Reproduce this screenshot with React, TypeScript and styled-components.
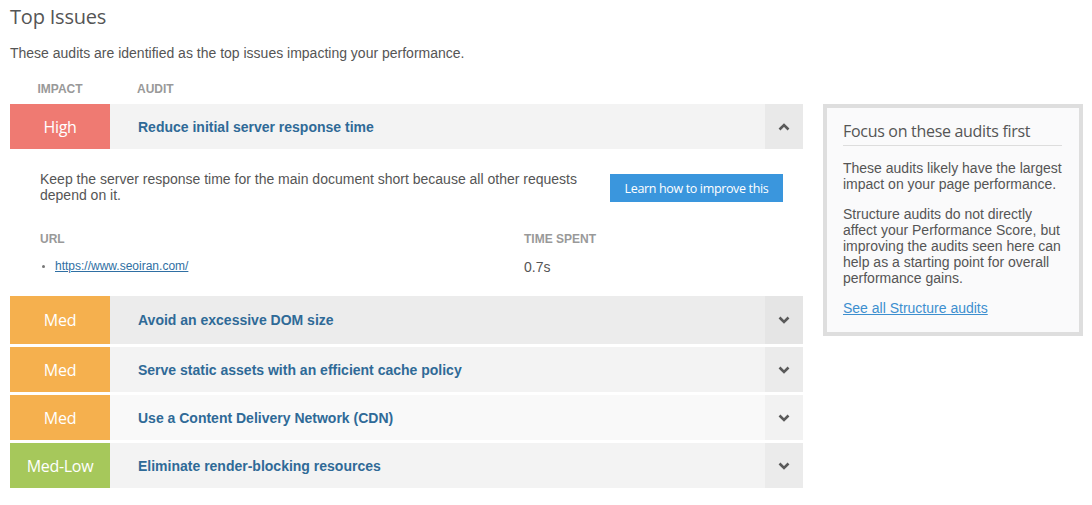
import React from "react";
import styled, { createGlobalStyle } from "styled-components";

const Global = createGlobalStyle`
  html, body { margin: 0; padding: 0; background: #fff; }
  body { font-family: "Liberation Sans", Arial, sans-serif; color: #555; }
`;

const Page = styled.div`
  display: flex;
  align-items: flex-start;
  gap: 20px;
  padding: 0 9px 0 10px;
  width: 1092px;
  box-sizing: border-box;
`;

const Main = styled.div`
  width: 793px;
  flex: none;
`;

const Title = styled.h2`
  margin: 0;
  padding-top: 4px;
  font-family: "Open Sans", sans-serif;
  font-weight: 400;
  font-size: 20px;
  line-height: 26px;
  color: #555;
  letter-spacing: -0.2px;
`;

const Intro = styled.p`
  margin: 15px 0 0;
  font-size: 14px;
  line-height: 16px;
  color: #555;
`;

const HeadRow = styled.div`
  display: flex;
  margin-top: 21px;
  height: 22px;
  align-items: flex-start;
`;

const HeadCell = styled.div<{ $w?: number; $center?: boolean; $pl?: number }>`
  width: ${(p) => (p.$w ? `${p.$w}px` : "auto")};
  text-align: ${(p) => (p.$center ? "center" : "left")};
  padding-left: ${(p) => p.$pl || 0}px;
  font-size: 12px;
  font-weight: 700;
  color: #999;
  text-transform: uppercase;
  line-height: 14px;
`;

const List = styled.div`
  display: flex;
  flex-direction: column;
  gap: 3px;
`;

const Item = styled.div``;

const Row = styled.div<{ $bg: string; $h?: number }>`
  display: flex;
  height: ${(p) => p.$h || 45}px;
  background: ${(p) => p.$bg};
  align-items: stretch;
`;

const Badge = styled.div<{ $color: string }>`
  width: 100px;
  flex: none;
  background: ${(p) => p.$color};
  color: #fff;
  display: flex;
  align-items: center;
  justify-content: center;
  font-family: "Open Sans", sans-serif;
  font-size: 16px;
  letter-spacing: -0.3px;
`;

const AuditTitle = styled.div`
  flex: 1;
  display: flex;
  align-items: center;
  padding-left: 28px;
  font-size: 14px;
  font-weight: 700;
  color: #2f6a97;
`;

const Toggle = styled.div<{ $bg: string }>`
  width: 38px;
  flex: none;
  background: ${(p) => p.$bg};
  display: flex;
  align-items: center;
  justify-content: center;
`;

const Details = styled.div`
  padding: 22px 20px 17px 30px;
`;

const DescRow = styled.div`
  display: flex;
  justify-content: space-between;
  align-items: flex-start;
`;

const Desc = styled.p`
  margin: 0;
  width: 545px;
  font-size: 14px;
  line-height: 16px;
  color: #555;
`;

const Button = styled.a`
  display: flex;
  align-items: center;
  justify-content: center;
  width: 173px;
  height: 28px;
  margin-top: 3px;
  background: #3a96dd;
  color: #fff;
  font-family: "Open Sans", sans-serif;
  font-size: 12.5px;
  letter-spacing: -0.35px;
  text-decoration: none;
`;

const Table = styled.div`
  display: grid;
  grid-template-columns: 484px 1fr;
  margin-top: 29px;
  row-gap: 12px;
`;

const Th = styled.div`
  font-size: 12px;
  font-weight: 700;
  color: #999;
  line-height: 14px;
`;

const UrlList = styled.ul`
  margin: 0;
  padding-left: 15px;
  font-size: 12px;
  line-height: 16px;
  li::marker { color: #777; font-size: 10px; }
`;

const Link = styled.a`
  color: #2f6fa3;
  text-decoration: underline;
`;

const Td = styled.div`
  font-size: 14px;
  line-height: 18px;
  color: #555;
`;

const Side = styled.aside`
  width: 260px;
  box-sizing: border-box;
  margin-top: 104px;
  border: 4px solid #dedede;
  background: #fafafb;
  padding: 12px 17px 15px 16px;
`;

const SideTitle = styled.h3`
  margin: 0;
  font-family: "Open Sans", sans-serif;
  font-weight: 400;
  font-size: 16px;
  line-height: 22px;
  color: #555;
  letter-spacing: -0.3px;
  padding-bottom: 3px;
  border-bottom: 1px solid #ddd;
`;

const SideText = styled.p`
  margin: 14px 0 0;
  font-size: 14px;
  line-height: 16px;
  color: #555;
`;

const SideLink = styled.a`
  display: inline-block;
  margin-top: 14px;
  font-size: 14px;
  line-height: 16px;
  color: #3d8fcf;
  text-decoration: underline;
`;

const Chevron = ({ up }: { up?: boolean }) => (
  <svg width="12" height="8" viewBox="0 0 12 8">
    <polyline
      points={up ? "1.5,6.5 6,2 10.5,6.5" : "1.5,1.5 6,6 10.5,1.5"}
      fill="none"
      stroke="#5a5a5a"
      strokeWidth="2.6"
    />
  </svg>
);

const rows = [
  { impact: "Med", color: "#f5b04e", title: "Avoid an excessive DOM size", bg: "#ececec", tbg: "#e5e5e5", h: 48 },
  { impact: "Med", color: "#f5b04e", title: "Serve static assets with an efficient cache policy", bg: "#f3f3f3", tbg: "#ebebeb", h: 45 },
  { impact: "Med", color: "#f5b04e", title: "Use a Content Delivery Network (CDN)", bg: "#f9f9f9", tbg: "#f2f2f2", h: 45 },
  { impact: "Med-Low", color: "#a6c85b", title: "Eliminate render-blocking resources", bg: "#f3f3f3", tbg: "#ebebeb", h: 45 },
];

export default function App() {
  return (
    <>
      <Global />
      <Page>
        <Main>
          <Title>Top Issues</Title>
          <Intro>These audits are identified as the top issues impacting your performance.</Intro>
          <HeadRow>
            <HeadCell $w={100} $center>Impact</HeadCell>
            <HeadCell $pl={27}>Audit</HeadCell>
          </HeadRow>
          <List>
            <Item>
              <Row $bg="#f3f3f3">
                <Badge $color="#ef7a72">High</Badge>
                <AuditTitle>Reduce initial server response time</AuditTitle>
                <Toggle $bg="#e9e9e9">
                  <Chevron up />
                </Toggle>
              </Row>
              <Details>
                <DescRow>
                  <Desc>
                    Keep the server response time for the main document short because all other requests depend on it.
                  </Desc>
                  <Button href="#">Learn how to improve this</Button>
                </DescRow>
                <Table>
                  <Th>URL</Th>
                  <Th>TIME SPENT</Th>
                  <UrlList>
                    <li>
                      <Link href="#">https://www.seoiran.com/</Link>
                    </li>
                  </UrlList>
                  <Td>0.7s</Td>
                </Table>
              </Details>
            </Item>
            {rows.map((r) => (
              <Item key={r.title}>
                <Row $bg={r.bg} $h={r.h}>
                  <Badge $color={r.color}>{r.impact}</Badge>
                  <AuditTitle>{r.title}</AuditTitle>
                  <Toggle $bg={r.tbg}>
                    <Chevron />
                  </Toggle>
                </Row>
              </Item>
            ))}
          </List>
        </Main>
        <Side>
          <SideTitle>Focus on these audits first</SideTitle>
          <SideText>These audits likely have the largest impact on your page performance.</SideText>
          <SideText>
            Structure audits do not directly affect your Performance Score, but improving the audits seen here can help as a starting point for overall performance gains.
          </SideText>
          <SideLink href="#">See all Structure audits</SideLink>
        </Side>
      </Page>
    </>
  );
}
